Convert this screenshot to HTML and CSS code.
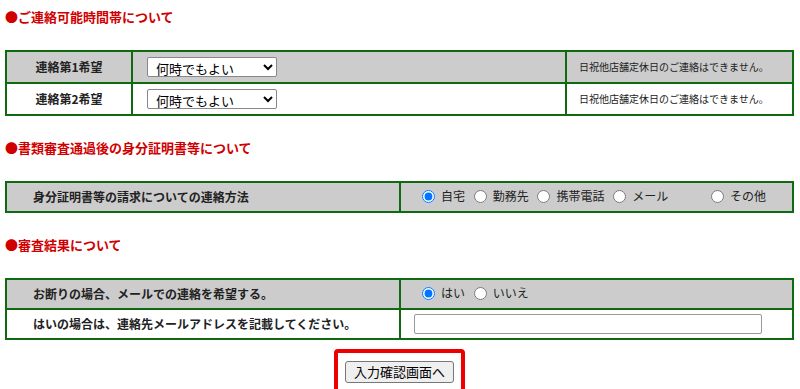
FILE: index.html
```html
<!DOCTYPE html>
<html lang="ja">
<head>
    <meta charset="UTF-8">
    <title>ご連絡について</title>
    <link rel="stylesheet" href="styles.css">
</head>
<body>
    <div class="container">
        <h2 class="heading">●ご連絡可能時間帯について</h2>
        <table class="form-table time-table">
            <tr class="gray">
                <th class="label-center">連絡第1希望</th>
                <td class="select-cell">
                    <select><option>何時でもよい</option></select>
                </td>
                <td class="note">日祝他店舗定休日のご連絡はできません。</td>
            </tr>
            <tr>
                <th class="label-center">連絡第2希望</th>
                <td class="select-cell">
                    <select><option>何時でもよい</option></select>
                </td>
                <td class="note">日祝他店舗定休日のご連絡はできません。</td>
            </tr>
        </table>

        <h2 class="heading">●書類審査通過後の身分証明書等について</h2>
        <table class="form-table half-table">
            <tr class="gray">
                <th class="label-left">身分証明書等の請求についての連絡方法</th>
                <td class="radio-cell">
                    <label><input type="radio" name="method" checked>自宅</label>
                    <label><input type="radio" name="method">勤務先</label>
                    <label><input type="radio" name="method">携帯電話</label>
                    <label class="wide"><input type="radio" name="method">メール</label>
                    <label><input type="radio" name="method">その他</label>
                </td>
            </tr>
        </table>

        <h2 class="heading">●審査結果について</h2>
        <table class="form-table half-table">
            <tr class="gray">
                <th class="label-left">お断りの場合、メールでの連絡を希望する。</th>
                <td class="radio-cell">
                    <label><input type="radio" name="mail" checked>はい</label>
                    <label><input type="radio" name="mail">いいえ</label>
                </td>
            </tr>
            <tr>
                <th class="label-left">はいの場合は、連絡先メールアドレスを記載してください。</th>
                <td class="input-cell"><input type="text" class="mail-input"></td>
            </tr>
        </table>

        <div class="submit-area">
            <div class="submit-frame">
                <button type="button">入力確認画面へ</button>
            </div>
        </div>
    </div>
</body>
</html>
```

FILE: styles.css
```css
body {
    font-family: "Noto Sans CJK JP", "DejaVu Sans", sans-serif;
    background-color: white;
    color: #222;
    margin: 0;
    padding: 0;
}

.container {
    padding: 8px 6px 0 5px;
}

.heading {
    color: #d00000;
    font-size: 13px;
    line-height: 18px;
    font-weight: bold;
    margin: 0 0 24px;
}

.form-table {
    width: 100%;
    border-collapse: collapse;
    border: 2px solid #106a10;
    margin-bottom: 23px;
    font-size: 12px;
    line-height: 16px;
}

.form-table th, .form-table td {
    border: 2px solid #106a10;
    padding: 0;
}

.form-table th {
    font-weight: bold;
}

.gray {
    background-color: #cccccc;
}

.time-table tr {
    height: 32px;
}

.time-table .label-center {
    width: 124px;
    text-align: center;
}

.select-cell {
    padding-left: 14px !important;
}

.select-cell select {
    width: 130px;
    height: 20px;
    font-family: inherit;
    font-size: 13px;
    background: white;
    border: 1px solid #888;
    border-radius: 2px;
    padding: 0 4px;
}

.time-table .note {
    width: 213px;
    font-size: 10px;
    padding-left: 12px;
}

.half-table tr {
    height: 30px;
}

.half-table .label-left {
    width: 366px;
    text-align: left;
    padding-left: 26px;
}

.radio-cell {
    font-size: 12px;
    white-space: nowrap;
    padding-left: 20px !important;
}

.radio-cell label {
    display: inline-flex;
    align-items: center;
    margin-right: 5px;
}

.radio-cell input {
    margin: 0 6px 0 1px;
}

.radio-cell .wide {
    margin-right: 39px;
}

.input-cell {
    padding-left: 13px !important;
}

.mail-input {
    width: 342px;
    height: 16px;
    border: 1px solid #999;
    border-radius: 2px;
}

.submit-area {
    display: flex;
    justify-content: center;
    margin-top: -14px;
}

.submit-frame {
    border: 4px solid #ee0000;
    border-radius: 4px;
    padding: 5px 7px 8px;
}

.submit-frame button {
    font-family: inherit;
    font-size: 13px;
    line-height: 18px;
    padding: 1px 8px;
    background: #efefef;
    border: 1px solid #777;
    border-radius: 3px;
}
```
